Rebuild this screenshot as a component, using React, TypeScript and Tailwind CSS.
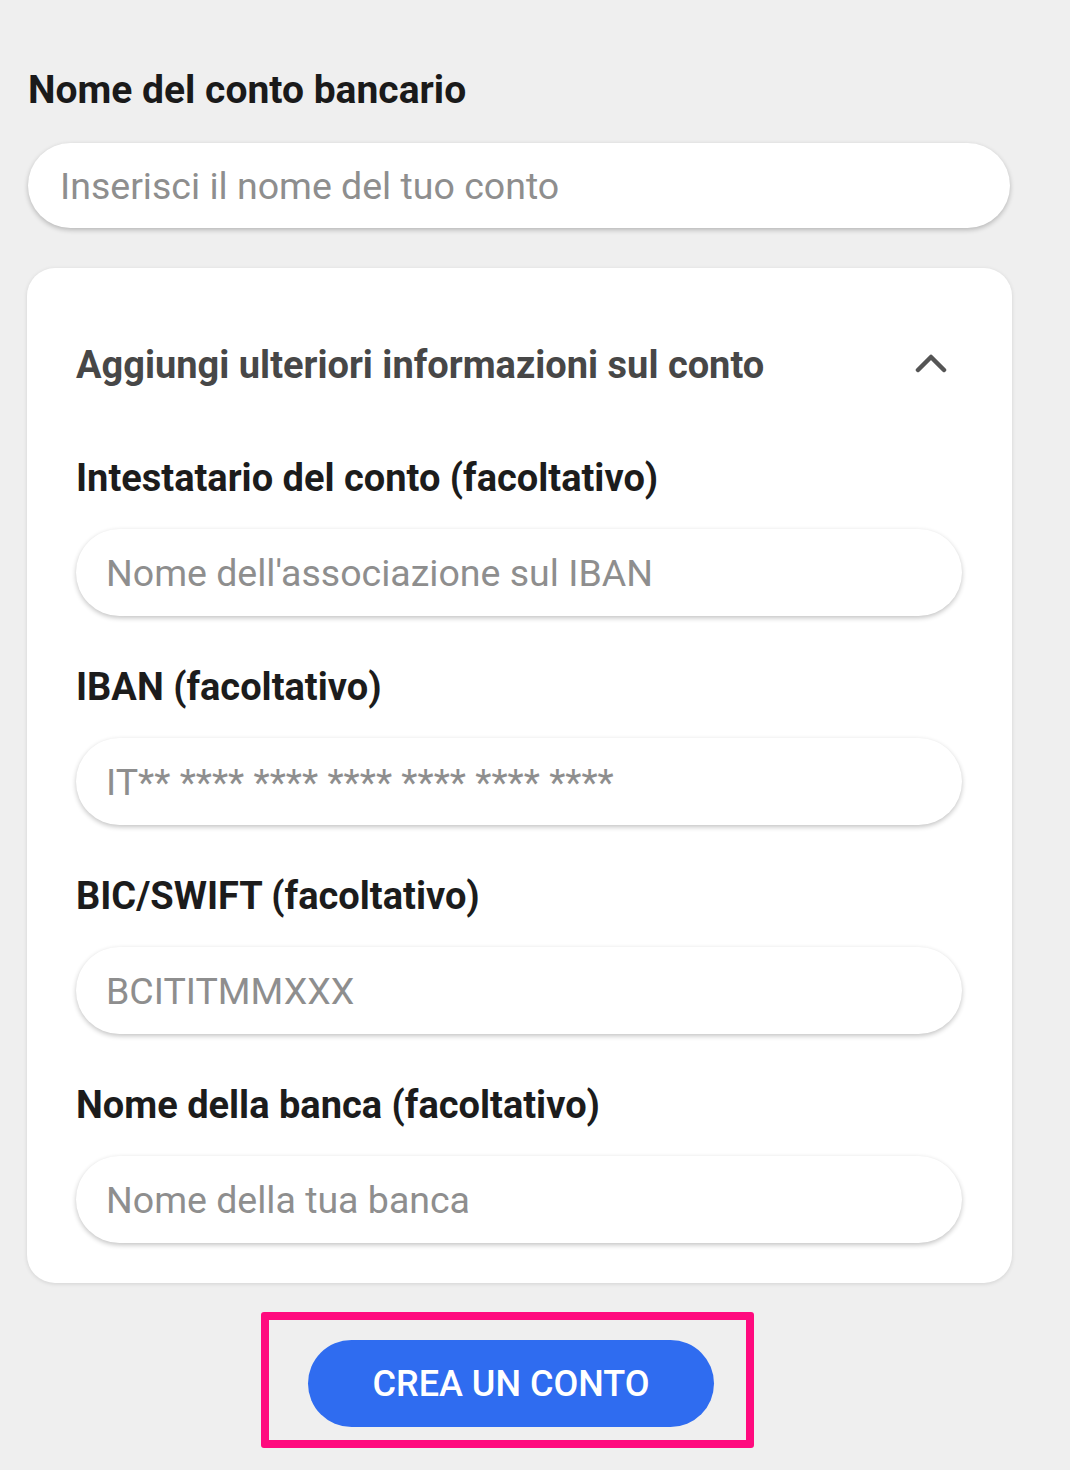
import React from "react";

const Field: React.FC<{ label: string; placeholder: string }> = ({ label, placeholder }) => {
  return (
    <div className="flex flex-col pt-[49px]">
      <label className="text-[38px] leading-[44px] font-bold text-[#1c1c1c]">{label}</label>
      <input
        readOnly
        placeholder={placeholder}
        className="mt-[29px] h-[87px] w-full rounded-full bg-white pl-[30px] text-[37.5px] text-[#333] placeholder:text-[#8e8e8e] outline-none shadow-[0_2px_5px_rgba(0,0,0,0.24)]"
      />
    </div>
  );
};

const App: React.FC = () => {
  return (
    <div className="min-h-[1470px] w-full bg-[#efefef] px-[27px] pt-[68px] font-['Roboto',sans-serif]">
      <h1 className="ml-[1px] text-[39px] leading-[44px] font-bold text-[#1a1a1a]">Nome del conto bancario</h1>
      <input
        readOnly
        placeholder="Inserisci il nome del tuo conto"
        className="mt-[31px] ml-[1px] h-[85px] w-[982px] rounded-full bg-white pl-[32px] text-[37.5px] text-[#333] placeholder:text-[#8e8e8e] outline-none shadow-[0_2px_5px_rgba(0,0,0,0.24)]"
      />

      <div className="mt-[40px] w-[985px] rounded-[28px] bg-white pl-[49px] pr-[50px] pt-[75px] pb-[40px] shadow-[0_1px_4px_rgba(0,0,0,0.12)]">
        <div className="flex items-center justify-between pr-[15px] pb-[20px]">
          <span className="text-[38px] leading-[44px] font-bold text-[#474747]">
            Aggiungi ulteriori informazioni sul conto
          </span>
          <svg width="32" height="20" viewBox="0 0 32 20" fill="none" className="-mt-[4px]">
            <polyline points="3,17 16,4 29,17" stroke="#555" strokeWidth="4.5" strokeLinecap="round" strokeLinejoin="round" />
          </svg>
        </div>
        <Field label="Intestatario del conto (facoltativo)" placeholder="Nome dell'associazione sul IBAN" />
        <Field label="IBAN (facoltativo)" placeholder="IT** **** **** **** **** **** ****" />
        <Field label="BIC/SWIFT (facoltativo)" placeholder="BCITITMMXXX" />
        <Field label="Nome della banca (facoltativo)" placeholder="Nome della tua banca" />
      </div>

      <div className="mt-[29px] ml-[234px] h-[136px] w-[493px] rounded-[3px] border-[8px] border-[#ff0a7e] pl-[39px] pt-[20px]">
        <button className="flex h-[87px] w-[406px] items-center justify-center rounded-full bg-[#2f6cf0] text-[36px] font-medium text-white">
          CREA UN CONTO
        </button>
      </div>
    </div>
  );
};

export default App;
